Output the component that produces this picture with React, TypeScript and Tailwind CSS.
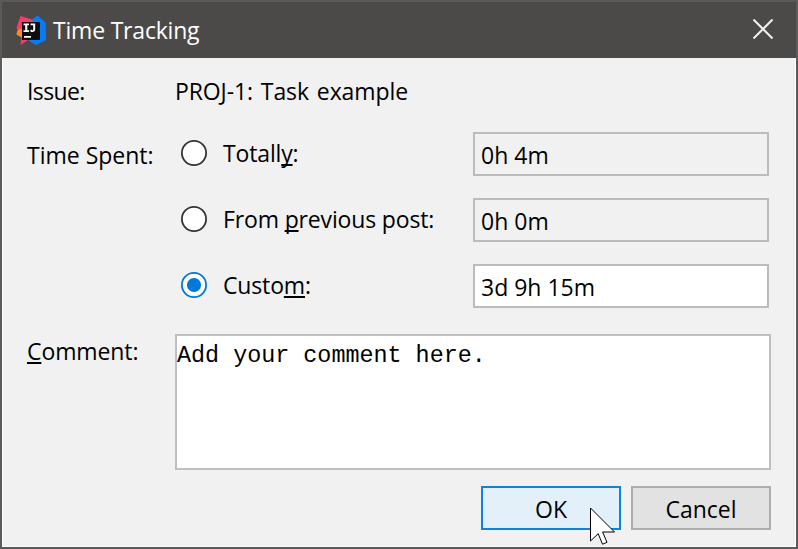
import type { ReactNode } from "react";

const accel = "underline decoration-2 underline-offset-2 [text-decoration-skip-ink:none]";

function Logo() {
  return (
    <svg width="32" height="32" viewBox="0 0 32 32" className="mt-3 ml-3.5 shrink-0">
      <path d="M14 7 21.500 1.500 29.500 8.500 30 26 20.500 31 13 27Z" fill="#087cf5" />
      <path d="M4.500 2 16 5.500 20 14 13 25.500 4.500 31 5.500 22 0.500 14Z" fill="#fc386d" />
      <path d="M3 15 12 14 5.500 23.500 0.500 20.500 1 17.500Z" fill="#fd8c23" />
      <rect x="6" y="8" width="18" height="18" fill="#0c0c0c" />
      <path d="M7.500 9.500H13v1.800h-1.700v4.900H13V18H7.500v-1.800h1.700v-4.900H7.500zM14.500 9.500h4.700v5.600c0 1.900-1 3-2.700 3-1.200 0-2-.5-2.500-1.300l1.200-1.300c.8 1.100 2 .9 2-.5v-3.700h-2.700zM8 22h7v1.700H8z" fill="#fff" />
    </svg>
  );
}

function Radio({ checked = false, children }: { checked?: boolean; children: ReactNode }) {
  return (
    <div className="flex w-[292px] shrink-0">
      <svg width="26" height="26" viewBox="0 0 26 26" className="mt-2 mr-4 shrink-0">
        <circle cx="13" cy="13" r="12.100" fill="#fff" stroke={checked ? "#0078d7" : "#333"} strokeWidth="1.800" />
        {checked && <circle cx="13" cy="13" r="7.100" fill="#0078d7" />}
      </svg>
      <div className="mt-1.5 tracking-[-0.15px]">{children}</div>
    </div>
  );
}

export default function App() {
  return (
    <div className="relative flex h-[549px] w-[798px] flex-col border-2 border-[#5a5a5a] bg-[#f1f1f1] font-['Open_Sans','Noto_Sans',sans-serif] text-[23px] leading-[30px] whitespace-nowrap text-black">
      <header className="flex h-14 shrink-0 bg-[#4c4a48] text-white">
        <Logo />
        <h1 className="mt-[13px] ml-[5px] text-[23px] font-normal tracking-[-0.2px]">Time Tracking</h1>
        <svg width="20" height="20" viewBox="0 0 20 20" className="mt-[17px] mr-[23px] ml-auto" stroke="#f1f1f1" strokeWidth="2">
          <path d="m.5.5 19 19m0-19-19 19" />
        </svg>
      </header>
      <main className="flex grow flex-col border-x border-b border-white pr-6 pl-6">
        <div className="mt-[18px] flex h-[50px]">
          <div className="w-[148px] tracking-[-0.6px]">Issue:</div>
          <div className="tracking-[-0.1px] [word-spacing:2px]">PROJ-1: Task example</div>
        </div>
        <div className="mt-1.5 flex">
          <div className="mt-2 w-[154px]">Time Spent:</div>
          <div className="flex flex-col gap-[22px]">
            <div className="flex">
              <Radio>Totall<span className={accel}>y</span>:</Radio>
              <div className="h-11 w-[296px] border-2 border-[#bcbcbc] px-1.5 py-1.5">0h 4m</div>
            </div>
            <div className="flex">
              <Radio>From <span className={accel}>p</span>revious post:</Radio>
              <div className="h-11 w-[296px] border-2 border-[#bcbcbc] px-1.5 py-1.5">0h 0m</div>
            </div>
            <div className="flex">
              <Radio checked>Custo<span className={accel}>m</span>:</Radio>
              <div className="h-11 w-[296px] border-2 border-[#bcbcbc] bg-white px-1.5 py-1.5">3d 9h 15m</div>
            </div>
          </div>
        </div>
        <div className="mt-[26px] flex">
          <div className="mt-0.5 w-[148px] tracking-[-0.1px]"><span className={accel}>C</span>omment:</div>
          <div className="h-[136px] w-[596px] border-2 border-[#bfbfbf] bg-white pt-[5px] font-['Liberation_Mono',monospace] text-[23.4px]">Add your comment here.</div>
        </div>
        <div className="mt-4 flex gap-2.5 pl-[454px]">
          <button className="h-11 w-[140px] border-2 border-[#0a84dc] bg-[#e3f0fa] pt-0.5">OK</button>
          <button className="h-11 w-[140px] border-2 border-[#adadad] bg-[#e2e2e2] pt-0.5">Cancel</button>
        </div>
      </main>
      <svg width="27" height="40" viewBox="0 0 27 40" className="absolute top-[504px] left-[587px]">
        <path d="M1.500 2v33l7.700-7.300 4.300 10.500 4.500-1.900-4.400-10.300H25.500Z" fill="#fff" stroke="#000" strokeWidth="1" />
      </svg>
    </div>
  );
}
